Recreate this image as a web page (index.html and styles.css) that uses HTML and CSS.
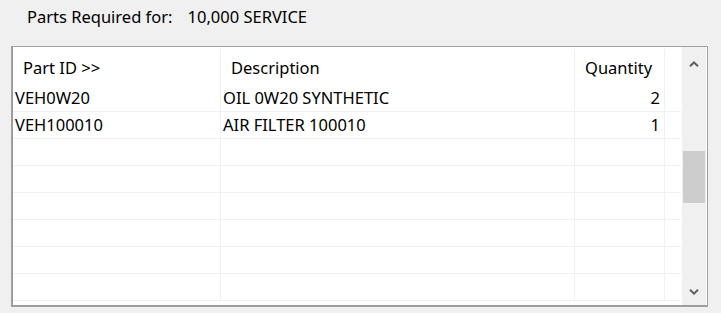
FILE: index.html
```html
<!DOCTYPE html>
<html>
<head>
<meta charset="utf-8">
<link rel="stylesheet" href="styles.css">
</head>
<body>
<div class="heading">
  <span class="label">Parts Required for:</span>
  <span class="value">10,000 SERVICE</span>
</div>
<div class="panel">
  <div class="grid">
    <div class="row head">
      <div class="cell c1">Part ID &gt;&gt;</div>
      <div class="cell c2">Description</div>
      <div class="cell c3">Quantity</div>
      <div class="cell c4"></div>
    </div>
    <div class="row">
      <div class="cell c1">VEH0W20</div>
      <div class="cell c2">OIL 0W20 SYNTHETIC</div>
      <div class="cell c3 num">2</div>
      <div class="cell c4"></div>
    </div>
    <div class="row">
      <div class="cell c1">VEH100010</div>
      <div class="cell c2">AIR FILTER 100010</div>
      <div class="cell c3 num">1</div>
      <div class="cell c4"></div>
    </div>
    <div class="row"><div class="cell c1"></div><div class="cell c2"></div><div class="cell c3"></div><div class="cell c4"></div></div>
    <div class="row"><div class="cell c1"></div><div class="cell c2"></div><div class="cell c3"></div><div class="cell c4"></div></div>
    <div class="row"><div class="cell c1"></div><div class="cell c2"></div><div class="cell c3"></div><div class="cell c4"></div></div>
    <div class="row"><div class="cell c1"></div><div class="cell c2"></div><div class="cell c3"></div><div class="cell c4"></div></div>
    <div class="row"><div class="cell c1"></div><div class="cell c2"></div><div class="cell c3"></div><div class="cell c4"></div></div>
    <div class="row"><div class="cell c1"></div><div class="cell c2"></div><div class="cell c3"></div><div class="cell c4"></div></div>
  </div>
  <div class="scrollbar">
    <div class="arrow up">
      <svg width="10" height="6" viewBox="0 0 10 6"><path d="M1 5.2 L5 1.4 L9 5.2" fill="none" stroke="#606060" stroke-width="2"/></svg>
    </div>
    <div class="track"><div class="thumb"></div></div>
    <div class="arrow down">
      <svg width="10" height="6" viewBox="0 0 10 6"><path d="M1 0.8 L5 4.6 L9 0.8" fill="none" stroke="#606060" stroke-width="2"/></svg>
    </div>
  </div>
</div>
</body>
</html>
```
FILE: styles.css
```css
html, body {
  margin: 0;
  padding: 0;
  background: #f0f0f0;
}
body {
  font-family: "Noto Sans", "Open Sans", sans-serif;
  font-size: 16.5px;
  color: #000;
  width: 721px;
  height: 313px;
  overflow: hidden;
}
.heading {
  height: 46px;
  padding-left: 27px;
  box-sizing: border-box;
  padding-top: 5px;
  line-height: 24px;
  display: flex;
  gap: 15px;
  color: #000;
}
.panel {
  margin-left: 11px;
  width: 697px;
  height: 261px;
  box-sizing: border-box;
  border: 1px solid #a0a0a0;
  box-shadow: inset 1px -1px 0 #9a9a9a;
  background: #fff;
  display: flex;
  overflow: hidden;
}
.grid {
  width: 668px;
  height: 258px;
  margin-left: 1px;
  overflow: hidden;
}
.row {
  display: flex;
  height: 27px;
  box-sizing: border-box;
  border-bottom: 1px solid #f0f0f0;
  line-height: 26px;
}
.row.head {
  height: 38px;
  border-bottom: none;
  line-height: 38px;
  padding-top: 1px;
}
.row.head .cell {
  padding-left: 10px;
  margin-top: 1px;
}
.cell {
  box-sizing: border-box;
  border-right: 1px solid #f0f0f0;
  white-space: nowrap;
  overflow: hidden;
}
.c1 { width: 208px; padding-left: 2px; }
.c2 { width: 354px; padding-left: 2px; }
.c3 { width: 90px; }
.c4 { flex: 1; border-right: none; }
.num { text-align: right; padding-right: 4px; }
.scrollbar {
  width: 24px;
  margin-left: 1px;
  background: #f0f0f0;
  display: flex;
  flex-direction: column;
  height: 258px;
}
.arrow {
  display: flex;
  align-items: center;
  justify-content: center;
}
.arrow.up { height: 34px; }
.arrow.down { height: 26px; }
.track { flex: 1; }
.thumb {
  margin-top: 70px;
  height: 52px;
  margin-left: 1px;
  width: 22px;
  background: #cdcdcd;
}
```
